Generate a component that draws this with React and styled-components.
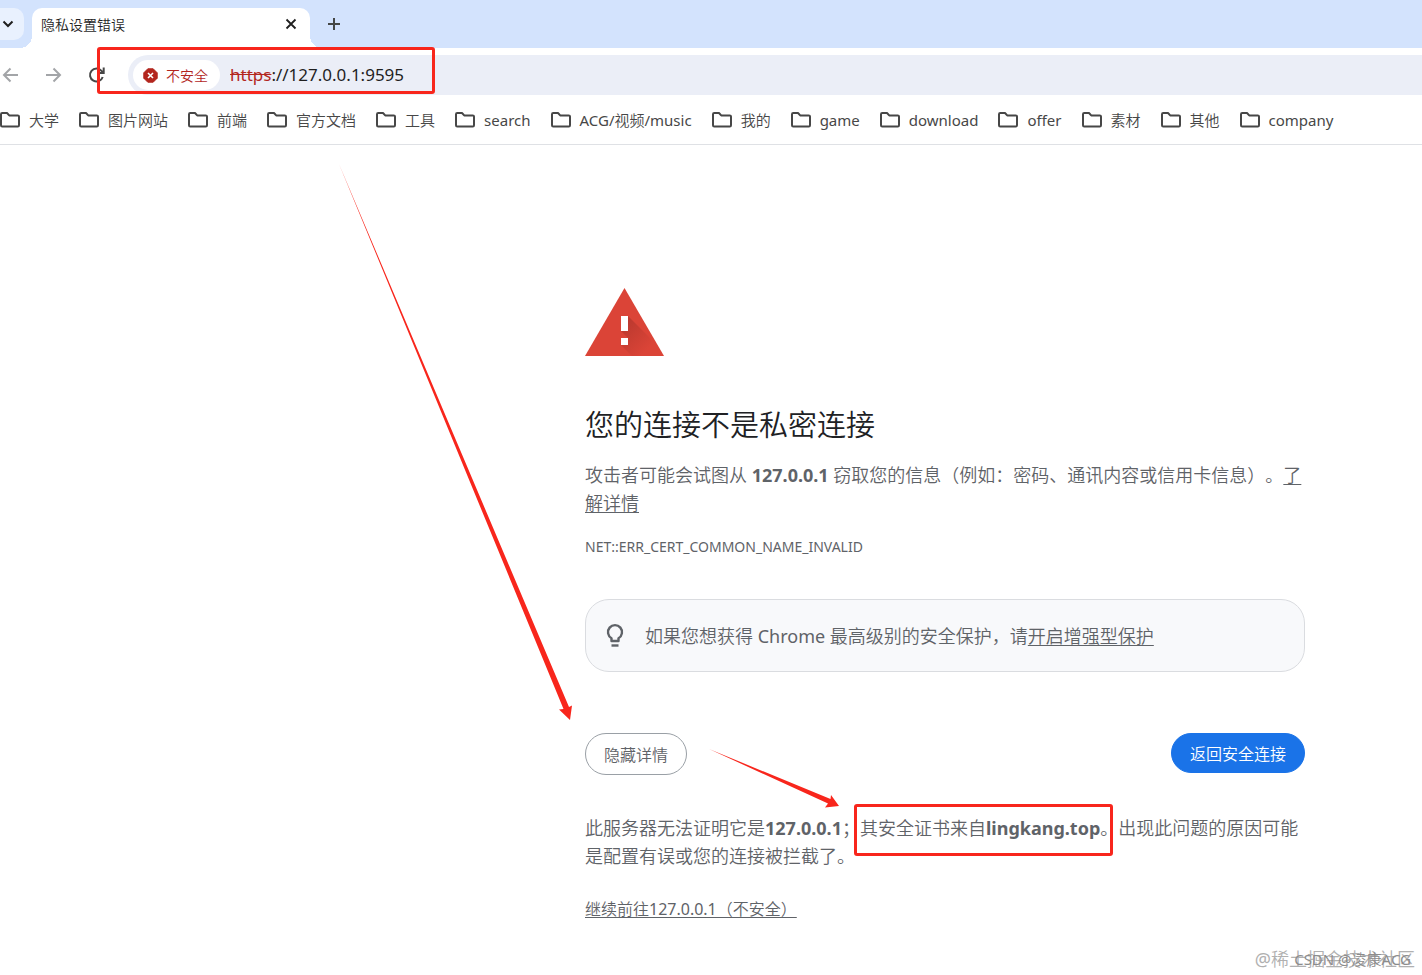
import styled, { createGlobalStyle } from "styled-components";

const GlobalStyle = createGlobalStyle`
    * {
        box-sizing: border-box;
    }
    body {
        margin: 0;
        background: #fff;
        color: #5f6368;
        font-family: "Noto Sans", "Noto Sans CJK SC DemiLight", "Noto Sans CJK SC", sans-serif;
        font-size: 18px;
        text-spacing-trim: space-all;
    }
    button, input {
        font-family: inherit;
    }
`;

const Page = styled.div`
    position: relative;
    min-height: 100vh;
    overflow: hidden;
`;
const TabStrip = styled.div`
    display: flex;
    height: 48px;
    background: #d3e3fd;
`;
const TabSearch = styled.button`
    width: 24px;
    height: 32px;
    margin: 8px 8px 0 0;
    padding: 0 8px 0 0;
    border: 0;
    border-radius: 0 10px 10px 0;
    background: #e9f1fe;
    color: #1f1f1f;
    display: flex;
    align-items: center;
    justify-content: center;
`;
const Tab = styled.div`
    position: relative;
    width: 278px;
    margin-top: 8px;
    padding: 0 12px 8px 9px;
    border-radius: 10px 10px 0 0;
    background: #fff;
    color: #1f1f1f;
    font-size: 14px;
    display: flex;
    align-items: center;
    justify-content: space-between;

    &::before,
    &::after {
        content: "";
        position: absolute;
        bottom: 0;
        width: 12px;
        height: 12px;
    }
    &::before {
        right: 100%;
        background: radial-gradient(circle at 0 0, transparent 12px, #fff 12px);
    }
    &::after {
        left: 100%;
        background: radial-gradient(circle at 100% 0, transparent 12px, #fff 12px);
    }
`;
const IconButton = styled.button`
    padding: 0;
    border: 0;
    background: none;
    color: ${(props) => props.$color || "#1f1f1f"};
    display: flex;
    align-items: center;
    justify-content: center;
`;
const NewTab = styled(IconButton)`
    width: 48px;
    height: 48px;
    color: #444746;
`;
const Toolbar = styled.div`
    display: flex;
    align-items: center;
    padding-top: 7px;
`;
const NavButtons = styled.div`
    width: 128px;
    display: flex;
    gap: 23px;
`;
const Address = styled.div`
    position: relative;
    flex: 1;
    height: 40px;
    padding-left: 5px;
    border-radius: 20px 0 0 20px;
    background: #ebeef7;
    display: flex;
    align-items: center;
`;
const Chip = styled.button`
    height: 30px;
    padding: 0 12px 0 10px;
    border: 0;
    border-radius: 15px;
    background: #fff;
    color: #b3261e;
    font-size: 14px;
    display: flex;
    align-items: center;
    gap: 8px;
`;
const Url = styled.p`
    margin: 0 0 0 10px;
    color: #1f1f1f;
    font-size: 17px;
    line-height: 22px;
`;
const Scheme = styled.s`
    color: #b3261e;
`;
const AddressMark = styled.div`
    position: absolute;
    top: -8px;
    left: -31px;
    width: 338px;
    height: 47px;
    border: 3px solid #f8261c;
    border-radius: 3px;
`;
const Bookmarks = styled.nav`
    height: 50px;
    border-bottom: 1px solid #dfe1e5;
    display: flex;
    align-items: center;
    gap: 20px;
    white-space: nowrap;
`;
const Bookmark = styled.a`
    color: #474747;
    font-size: 15px;
    line-height: 20px;
    text-decoration: none;
    display: flex;
    align-items: center;
    gap: 9px;
`;
const Main = styled.main`
    padding: 143px 0 40px;
    display: grid;
    grid-template-columns: 5fr minmax(0, 720px) 1fr;
`;
const Content = styled.div`
    grid-column: 2;
    line-height: 28px;
`;
const WarningIcon = styled.svg`
    display: block;
    width: 79px;
    height: 68px;
`;
const Title = styled.h1`
    margin: 51px 0 18px;
    color: #202124;
    font-size: 29px;
    font-weight: 400;
    line-height: 36px;
`;
const Text = styled.p`
    margin: 0;
`;
const Link = styled.a`
    color: inherit;
    text-underline-offset: 2px;
    text-decoration-thickness: 1px;
`;
const ErrorCode = styled.p`
    margin: 16px 0 38px;
    font-size: 14px;
`;
const Tip = styled.div`
    height: 73px;
    padding: 0 18px;
    border: 1px solid #dadce0;
    border-radius: 24px;
    background: #f8f9fb;
    display: flex;
    align-items: center;
    gap: 18px;
`;
const Actions = styled.div`
    margin: 61px 0 39px;
    display: flex;
    align-items: flex-start;
    justify-content: space-between;
`;
const PillButton = styled.button`
    height: ${(props) => (props.$primary ? "40px" : "42px")};
    padding: 0 18px;
    border: 1px solid ${(props) => (props.$primary ? "#1a73e8" : "#9aa0a6")};
    border-radius: 21px;
    background: ${(props) => (props.$primary ? "#1a73e8" : "#fff")};
    color: ${(props) => (props.$primary ? "#fff" : "#5f6368")};
    font-size: 16px;
`;
const Marked = styled.span`
    position: relative;
    white-space: nowrap;

    &::after {
        content: "";
        position: absolute;
        inset: -12px 5px -16px -6px;
        border: 3px solid #f8261c;
        border-radius: 3px;
    }
`;
const Proceed = styled.p`
    margin: 25px 0 0;
    font-size: 16px;
`;
const Arrow = styled.svg`
    position: absolute;
    top: ${(props) => props.$top}px;
    left: ${(props) => props.$left}px;
    pointer-events: none;
`;
const Watermark = styled.div`
    position: absolute;
    right: ${(props) => (props.$front ? "11px" : "7px")};
    bottom: 3px;
    color: ${(props) => (props.$front ? "#8c8c8c" : "#b0b0b0")};
    font-size: ${(props) => (props.$front ? "15px" : "18px")};
    line-height: 26px;
`;

const folders = [
    "大学", "图片网站", "前端", "官方文档", "工具", "search", "ACG/视频/music",
    "我的", "game", "download", "offer", "素材", "其他", "company",
];

function FolderIcon() {
    return (
        <svg width="20" height="16" viewBox="0 0 20 16" fill="none" stroke="#474747" strokeWidth="2" strokeLinejoin="round">
            <path d="M1 13.200V2.200Q1 1 2.200 1H7L9.200 3.400H17.800Q19 3.400 19 4.600V13.200Q19 14.400 17.800 14.400H2.200Q1 14.400 1 13.200Z" />
        </svg>
    );
}

function TabBar() {
    return (
        <TabStrip>
            <TabSearch aria-label="Search tabs">
                <svg width="12" height="8" viewBox="0 0 12 8" fill="none" stroke="currentColor" strokeWidth="2">
                    <path d="M1.500 1.500 6 6l4.500-4.500" />
                </svg>
            </TabSearch>
            <Tab>
                隐私设置错误
                <IconButton aria-label="Close tab">
                    <svg width="14" height="14" viewBox="0 0 14 14" stroke="currentColor" strokeWidth="1.800">
                        <path d="M2.500 2.500l9 9M11.500 2.500l-9 9" />
                    </svg>
                </IconButton>
            </Tab>
            <NewTab aria-label="New tab">
                <svg width="14" height="14" viewBox="0 0 14 14" stroke="currentColor" strokeWidth="2">
                    <path d="M7 1v12M1 7h12" />
                </svg>
            </NewTab>
        </TabStrip>
    );
}

function AddressBar() {
    return (
        <Toolbar>
            <NavButtons>
                <IconButton $color="#a3a5a8" aria-label="Back">
                    <svg width="20" height="16" viewBox="0 0 20 16" fill="none" stroke="currentColor" strokeWidth="2">
                        <path d="M18 8H4M10.500 1.500 4 8l6.500 6.500" />
                    </svg>
                </IconButton>
                <IconButton $color="#a3a5a8" aria-label="Forward">
                    <svg width="20" height="16" viewBox="0 0 20 16" fill="none" stroke="currentColor" strokeWidth="2">
                        <path d="M3 8h14M10.500 1.500 17 8l-6.500 6.500" />
                    </svg>
                </IconButton>
                <IconButton $color="#474747" aria-label="Reload">
                    <svg width="20" height="18" viewBox="0 0 20 18" fill="none" stroke="currentColor" strokeWidth="2">
                        <path d="M16.700 11a6.500 6.500 0 1 1-1.200-6.200L17.500 7M17.700 1.500V7H12" />
                    </svg>
                </IconButton>
            </NavButtons>
            <Address>
                <Chip>
                    <svg width="15" height="15" viewBox="0 0 15 15">
                        <path d="M4.800.800h5.400l4 4v5.400l-4 4H4.800l-4-4V4.800z" fill="#b3261e" stroke="#b3261e" strokeLinejoin="round" />
                        <path d="M5 5l5 5M10 5l-5 5" stroke="#fff" strokeWidth="1.600" />
                    </svg>
                    不安全
                </Chip>
                <Url><Scheme>https</Scheme>://127.0.0.1:9595</Url>
                <AddressMark />
            </Address>
        </Toolbar>
    );
}

function Warning() {
    return (
        <WarningIcon viewBox="0 0 79 68">
            <defs>
                <linearGradient id="shade" gradientUnits="userSpaceOnUse" x1="38" y1="38" x2="62" y2="62">
                    <stop offset="0" stopColor="#a8332a" />
                    <stop offset="1" stopColor="#db4437" />
                </linearGradient>
            </defs>
            <path d="M39.500 0 79 68H0z" fill="#db4437" />
            <path d="M43 28 64 49 75 68H47L36 57H43V50L36 43H43z" fill="url(#shade)" opacity="0.600" />
            <path d="M36 28h7v15h-7zM36 50h7v7h-7z" fill="#fff" />
        </WarningIcon>
    );
}

function App() {
    return (
        <Page>
            <GlobalStyle />
            <TabBar />
            <AddressBar />
            <Bookmarks>
                {folders.map((name) => (
                    <Bookmark href="#" key={name}>
                        <FolderIcon />
                        {name}
                    </Bookmark>
                ))}
            </Bookmarks>
            <Main>
                <Content>
                    <Warning />
                    <Title>您的连接不是私密连接</Title>
                    <Text>
                        攻击者可能会试图从 <strong>127.0.0.1</strong> 窃取您的信息（例如：密码、通讯内容或信用卡信息）。<Link href="#">了解详情</Link>
                    </Text>
                    <ErrorCode>NET::ERR_CERT_COMMON_NAME_INVALID</ErrorCode>
                    <Tip>
                        <svg width="23" height="26" viewBox="0 0 23 26" fill="none" stroke="#5f6368" strokeWidth="2.400">
                            <path d="M7.500 18V15.200A7 7 0 1 1 14.500 15.200V18Z" strokeLinejoin="round" />
                            <path d="M7.500 22.500h7" />
                        </svg>
                        <Text>
                            如果您想获得 Chrome 最高级别的安全保护，请<Link href="#">开启增强型保护</Link>
                        </Text>
                    </Tip>
                    <Actions>
                        <PillButton>隐藏详情</PillButton>
                        <PillButton $primary>返回安全连接</PillButton>
                    </Actions>
                    <Text>
                        此服务器无法证明它是<strong>127.0.0.1</strong>；<Marked>其安全证书来自<strong>lingkang.top</strong>。</Marked>出现此问题的原因可能是配置有误或您的连接被拦截了。
                    </Text>
                    <Proceed>
                        <Link href="#">继续前往127.0.0.1（不安全）</Link>
                    </Proceed>
                </Content>
            </Main>
            <Arrow $top={160} $left={335} width="240" height="562" viewBox="0 0 240 562" fill="#f8261c">
                <path d="M4 4 228.500 549 224 549.500 235 560 237 545.500 234 547z" />
            </Arrow>
            <Arrow $top={745} $left={705} width="138" height="65" viewBox="0 0 138 65" fill="#f8261c">
                <path d="M4 4 123 58.500 120 62.500 134 61 126 50 125.500 54z" />
            </Arrow>
            <Watermark>@稀土掘金技术社区</Watermark>
            <Watermark $front>CSDN @凌康ACG</Watermark>
        </Page>
    );
}

export default App;
